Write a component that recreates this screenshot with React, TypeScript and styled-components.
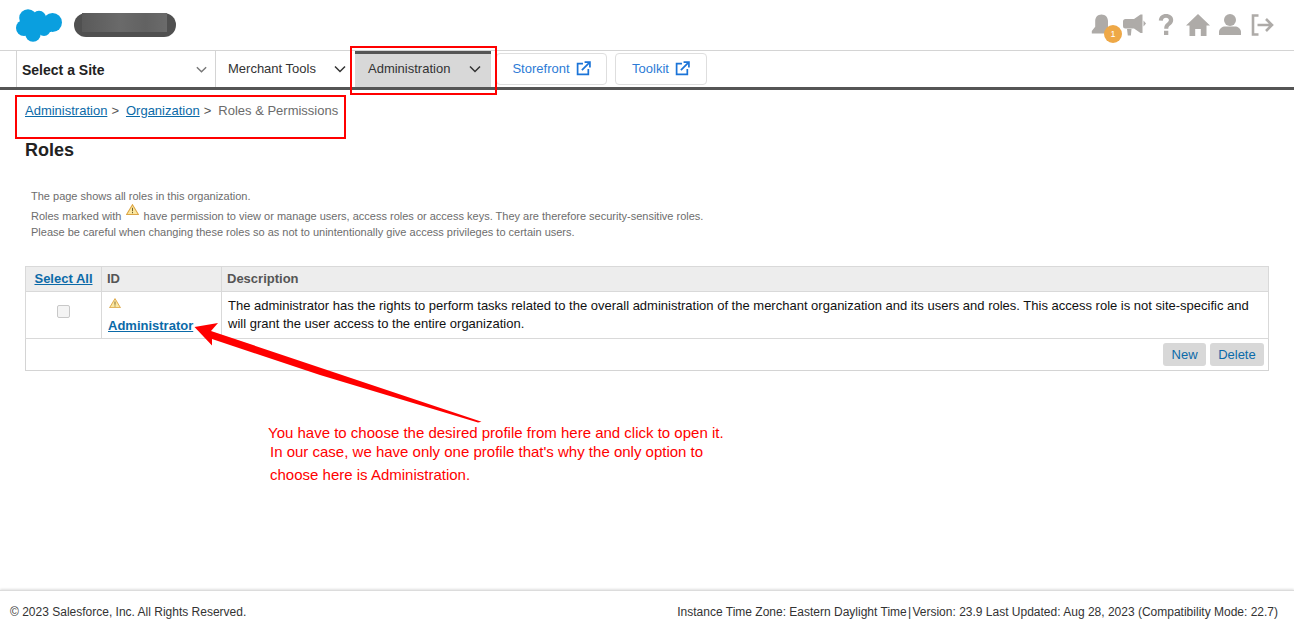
import React from "react";
import styled, { createGlobalStyle } from "styled-components";

const Global = createGlobalStyle`
  html, body { margin: 0; padding: 0; background: #fff; }
  body { font-family: "Liberation Sans", Arial, sans-serif; }
  #root { width: 1294px; height: 632px; overflow: hidden; }
`;

const Page = styled.div`
  position: relative;
  width: 1294px;
  height: 632px;
  display: flex;
  flex-direction: column;
`;

const Header = styled.header`
  height: 50px;
  display: flex;
  align-items: center;
  justify-content: space-between;
  padding: 0 20px 0 15px;
  border-bottom: 1px solid #d4d4d4;
  flex: none;
`;

const Brand = styled.div`
  display: flex;
  align-items: center;
  gap: 11px;
`;

const BlurredName = styled.div`
  width: 102px;
  height: 24px;
  border-radius: 12px;
  background: #505050;
  display: flex;
  align-items: center;
  padding-left: 8px;
  box-sizing: border-box;
`;

const BlurredInner = styled.div`
  width: 85px;
  height: 19px;
  margin-top: -5px;
  background: linear-gradient(90deg, #5a5a5a, #6a6a6a 45%, #626262 75%, #6b6b6b);
  filter: blur(0.6px);
`;

const Tools = styled.div`
  display: flex;
  align-items: center;
  gap: 6px;
  margin-right: -1px;
`;

const ToolIcon = styled.span`
  position: relative;
  width: 26px;
  height: 26px;
  display: block;
  color: #aeaba8;
  svg { display: block; width: 26px; height: 26px; fill: currentColor; }
`;

const Badge = styled.span`
  position: absolute;
  left: 15px;
  top: 13px;
  width: 18px;
  height: 18px;
  border-radius: 50%;
  background: #eea847;
  color: #fff;
  font-size: 9px;
  line-height: 18px;
  text-align: center;
`;

const Nav = styled.nav`
  height: 36px;
  flex: none;
  display: flex;
  padding-left: 16px;
  border-bottom: 3px solid #555;
`;

const SiteSelect = styled.div`
  width: 186px;
  border-left: 1px solid #d4d4d4;
  border-right: 1px solid #d4d4d4;
  display: flex;
  align-items: center;
  justify-content: space-between;
  padding: 2px 7px 0 5px;
  font-size: 14px;
  font-weight: bold;
  color: #222;
  svg { color: #777; margin-top: -2px; }
`;

const NavItem = styled.div<{ $active?: boolean }>`
  height: ${(p) => (p.$active ? "33px" : "36px")};
  display: flex;
  align-items: center;
  font-size: 13px;
  color: #333;
  justify-content: space-between;
  padding: 0 ${(p) => (p.$active ? "9px" : "4px")} 0 ${(p) => (p.$active ? "13px" : "12px")};
  width: ${(p) => (p.$active ? "114px" : "119px")};
  margin-left: ${(p) => (p.$active ? "4px" : "0")};
  background: ${(p) => (p.$active ? "#d8d8d8" : "transparent")};
  border-top: ${(p) => (p.$active ? "3px solid #555" : "none")};
  span { margin-top: ${(p) => (p.$active ? "-5px" : "-2px")}; }
  svg { color: #333; margin-top: ${(p) => (p.$active ? "-3px" : "-1px")}; }
`;

const ExternalButton = styled.a<{ $width: number; $gap: number }>`
  width: ${(p) => p.$width}px;
  height: 32px;
  margin: 2px 0 0 ${(p) => p.$gap}px;
  box-sizing: border-box;
  border: 1px solid #dedede;
  border-radius: 4px;
  display: flex;
  align-items: center;
  justify-content: center;
  gap: 6px;
  font-size: 13px;
  color: #2d7bd6;
  padding-bottom: 1px;
  svg { color: #1b74d8; }
`;

const Main = styled.main`
  flex: 1;
  padding: 0 25px;
  min-height: 0;
`;

const Crumbs = styled.div`
  padding-top: 13px;
  height: 30px;
  box-sizing: border-box;
  font-size: 13px;
  line-height: 15px;
  color: #6b6b6b;
`;

const Link = styled.a`
  color: #0b6aa8;
  text-decoration: underline;
`;

const Sep = styled.span`
  color: #555;
  margin: 0 7px 0 4px;
`;

const Title = styled.h1`
  margin: 20px 0 0;
  font-size: 18px;
  line-height: 21px;
  font-weight: bold;
  color: #222;
`;

const Info = styled.div`
  margin: 28px 0 0 6px;
  font-size: 11px;
  color: #6d6d6d;
`;

const InfoLine = styled.div<{ $gap?: number }>`
  height: 14px;
  margin-top: ${(p) => p.$gap ?? 0}px;
  line-height: 14px;
  white-space: nowrap;
  svg { vertical-align: 5px; margin: -8px 2px 0 1px; }
`;

const Table = styled.table`
  margin-top: 27px;
  width: 1244px;
  border-collapse: collapse;
  table-layout: fixed;
  font-size: 13px;
  border: 1px solid #d4d4d4;
`;

const Th = styled.th<{ $center?: boolean; $w?: number }>`
  height: 25px;
  padding: 0 5px 2px;
  box-sizing: border-box;
  width: ${(p) => (p.$w ? `${p.$w}px` : "auto")};
  background: #ededed;
  border: 1px solid #d9d9d9;
  color: #555;
  text-align: ${(p) => (p.$center ? "center" : "left")};
  font-weight: bold;
`;

const Td = styled.td<{ $center?: boolean }>`
  padding: 5px 6px;
  border: 1px solid #d9d9d9;
  vertical-align: top;
  line-height: 18px;
  color: #111;
  text-align: ${(p) => (p.$center ? "center" : "left")};
`;

const Check = styled.span`
  display: inline-block;
  width: 11px;
  height: 11px;
  margin-top: 8px;
  border: 1px solid #c8c8c8;
  border-radius: 2px;
  background: #f4f4f4;
`;

const IdCell = styled.div`
  height: 38px;
  margin-bottom: -2px;
  display: flex;
  flex-direction: column;
  justify-content: space-between;
  align-items: flex-start;
  font-weight: bold;
  svg { margin: 1px 0 0 1px; }
`;

const ActionBar = styled.div`
  height: 29px;
  display: flex;
  justify-content: flex-end;
  align-items: center;
  gap: 4px;
  padding-right: 3px;
`;

const Action = styled.button`
  height: 23px;
  padding: 0 8.3px;
  border: none;
  border-radius: 3px;
  background: #d8d8d8;
  color: #0b6aa8;
  font: 13px "Liberation Sans", Arial, sans-serif;
`;

const Footer = styled.footer`
  height: 42px;
  flex: none;
  margin-top: auto;
  border-top: 1px solid #dcdcdc;
  box-shadow: 0 -1px 2px rgba(0, 0, 0, 0.12);
  box-sizing: border-box;
  display: flex;
  align-items: center;
  justify-content: space-between;
  padding: 1px 16px 0 10px;
  font-size: 12px;
  color: #333;
`;

const Pipe = styled.span`
  margin: 0 1.3px;
`;

const Highlight = styled.div<{ $l: number; $t: number; $w: number; $h: number }>`
  position: absolute;
  left: ${(p) => p.$l}px;
  top: ${(p) => p.$t}px;
  width: ${(p) => p.$w}px;
  height: ${(p) => p.$h}px;
  border: 2px solid #f00;
  box-sizing: border-box;
`;

const ArrowArt = styled.svg`
  position: absolute;
  left: 0;
  top: 0;
  pointer-events: none;
`;

const Note = styled.div<{ $l: number; $t: number }>`
  position: absolute;
  left: ${(p) => p.$l}px;
  top: ${(p) => p.$t}px;
  font-size: 15px;
  line-height: 18px;
  color: #f00;
  white-space: nowrap;
`;

const Chevron = ({ size = 14 }: { size?: number }) => (
  <svg width={size} height={size} viewBox="0 0 14 14" fill="none" stroke="currentColor" strokeWidth="1.5">
    <path d="M2 4.5 7 9.5 12 4.5" />
  </svg>
);

const ExtIcon = () => (
  <svg width="15" height="15" viewBox="0 0 14 14" fill="none" stroke="currentColor" strokeWidth="1.6">
    <path d="M6.5 2.5H1.5V12.5H11.5V7.5" />
    <path d="M5.5 8.5 12.5 1.5M8 1H13V6" />
  </svg>
);

const Warn = ({ w = 13 }: { w?: number }) => (
  <svg width={w} height={w * 0.85} viewBox="0 0 14 12">
    <path d="M7 .7 13.4 11.4H.6Z" fill="#fbe7a0" stroke="#dca544" strokeWidth="1.1" />
    <path d="M6.5 4h1v4h-1zM6.5 8.8h1v1.2h-1z" fill="#6a5520" />
  </svg>
);

export default function App() {
  return (
    <Page>
      <Global />
      <Header>
        <Brand>
          <svg width="48" height="34" viewBox="0 0 48 34">
            <g fill="#0a9fdf">
              <circle cx="13" cy="10" r="8.8" />
              <circle cx="24" cy="10" r="7.2" />
              <circle cx="37.5" cy="14.5" r="9.5" />
              <circle cx="9" cy="20" r="8" />
              <circle cx="18" cy="26" r="7.7" />
              <circle cx="29" cy="21.5" r="6.5" />
              <rect x="10" y="10" width="26" height="14" />
            </g>
          </svg>
          <BlurredName>
            <BlurredInner />
          </BlurredName>
        </Brand>
        <Tools>
          <ToolIcon>
            <svg viewBox="0 0 26 26">
              <path d="M12.500 2.500c-3.800 0-6.300 2.800-6.300 6.500v5.700L2.800 19v2.500h19.400V19L19 14.700V9c0-3.700-2.700-6.500-6.500-6.500Z" />
            </svg>
            <Badge>1</Badge>
          </ToolIcon>
          <ToolIcon>
            <svg viewBox="0 0 26 26">
              <path d="M2 9.500Q2 7 4.500 7H13L19.500 2.500H21.500V21H19.500L13 16.500H4.500Q2 16.500 2 14ZM6 17h4.500l-.6 6.500H6.800ZM22.500 8.500l2.500 3-2.500 3Z" />
            </svg>
          </ToolIcon>
          <ToolIcon>
            <svg viewBox="0 0 26 26">
              <path d="M5.800 8.500C6.100 4.300 9 2 13 2c4.200 0 7.200 2.400 7.200 6 0 2.800-1.500 4.100-3.200 5.400-1.300 1-1.700 1.600-1.700 3.300h-4.100c0-3 .9-4.300 2.700-5.700 1.200-1 2-1.700 2-2.900 0-1.500-1.100-2.400-2.900-2.400-1.900 0-3 1.100-3.200 3ZM11 18.800h4.300V23H11Z" />
            </svg>
          </ToolIcon>
          <ToolIcon>
            <svg viewBox="0 0 26 26">
              <path d="M13 2 25 13.500h-3.500V24H15.800v-7h-5.600v7H4.500V13.500H1Z" />
            </svg>
          </ToolIcon>
          <ToolIcon>
            <svg viewBox="0 0 26 26">
              <circle cx="13" cy="8" r="6" />
              <path d="M2 23v-3c0-3.500 3.500-5.500 6-5.500h10c2.500 0 6 2 6 5.500v3Z" />
            </svg>
          </ToolIcon>
          <ToolIcon>
            <svg viewBox="0 0 26 26" style={{ fill: "none" }} stroke="currentColor" strokeWidth="2.600">
              <path d="M9.500 3.500H4v19h5.500M8.500 13H23M17 7l6 6-6 6" />
            </svg>
          </ToolIcon>
        </Tools>
      </Header>
      <Nav>
        <SiteSelect>
          Select a Site
          <Chevron size={13} />
        </SiteSelect>
        <NavItem>
          <span>Merchant Tools</span>
          <Chevron />
        </NavItem>
        <NavItem $active>
          <span>Administration</span>
          <Chevron />
        </NavItem>
        <ExternalButton $width={111} $gap={5}>
          Storefront <ExtIcon />
        </ExternalButton>
        <ExternalButton $width={92} $gap={8}>
          Toolkit <ExtIcon />
        </ExternalButton>
      </Nav>
      <Main>
        <Crumbs>
          <Link>Administration</Link>
          <Sep>&gt;</Sep>
          <Link>Organization</Link>
          <Sep>&gt;</Sep>
          Roles &amp; Permissions
        </Crumbs>
        <Title>Roles</Title>
        <Info>
          <InfoLine>The page shows all roles in this organization.</InfoLine>
          <InfoLine $gap={6}>
            Roles marked with <Warn /> have permission to view or manage users, access roles or access keys. They are
            therefore security-sensitive roles.
          </InfoLine>
          <InfoLine $gap={2}>
            Please be careful when changing these roles so as not to unintentionally give access privileges to certain
            users.
          </InfoLine>
        </Info>
        <Table>
          <thead>
            <tr>
              <Th $center $w={76}>
                <Link>Select All</Link>
              </Th>
              <Th $w={120}>ID</Th>
              <Th>Description</Th>
            </tr>
          </thead>
          <tbody>
            <tr>
              <Td $center>
                <Check />
              </Td>
              <Td>
                <IdCell>
                  <Warn w={12} />
                  <Link>Administrator</Link>
                </IdCell>
              </Td>
              <Td>
                The administrator has the rights to perform tasks related to the overall administration of the merchant
                organization and its users and roles. This access role is not site-specific and will grant the user
                access to the entire organization.
              </Td>
            </tr>
            <tr>
              <td colSpan={3}>
                <ActionBar>
                  <Action>New</Action>
                  <Action>Delete</Action>
                </ActionBar>
              </td>
            </tr>
          </tbody>
        </Table>
      </Main>
      <Footer>
        <span>© 2023 Salesforce, Inc. All Rights Reserved.</span>
        <span>
          Instance Time Zone: Eastern Daylight Time<Pipe>|</Pipe>Version: 23.9 Last Updated: Aug 28, 2023 (Compatibility
          Mode: 22.7)
        </span>
      </Footer>
      <Highlight $l={350} $t={46} $w={147} $h={49} />
      <Highlight $l={15} $t={95} $w={331} $h={44} />
      <ArrowArt width="1294" height="632" viewBox="0 0 1294 632">
        <path d="M194.500 327 218 323 211 331 481.500 421.700 478 422.500 320 375 212 339 212 345.500Z" fill="#f00" />
      </ArrowArt>
      <Note $l={268} $t={424}>You have to choose the desired profile from here and click to open it.</Note>
      <Note $l={270} $t={443}>In our case, we have only one profile that's why the only option to</Note>
      <Note $l={270} $t={466}>choose here is Administration.</Note>
    </Page>
  );
}
